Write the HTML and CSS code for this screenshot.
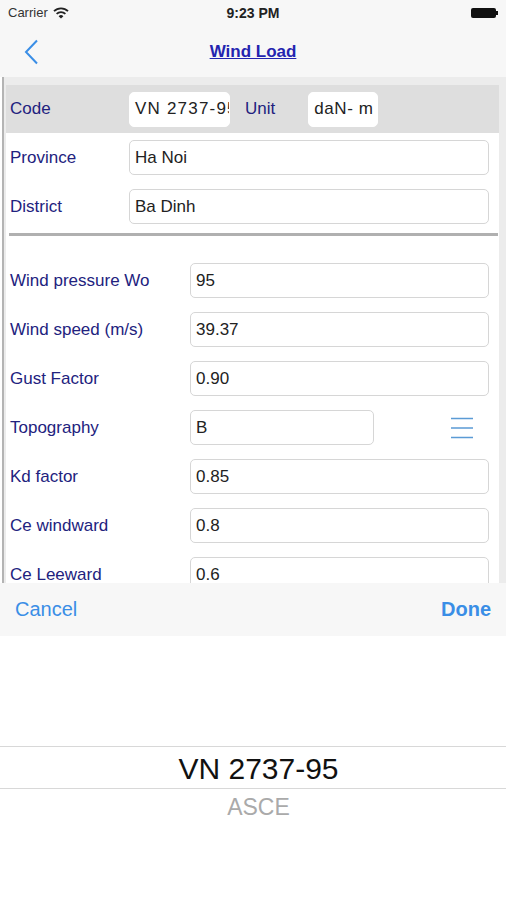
FILE: index.html
```html
<!DOCTYPE html>
<html lang="en">
<head>
  <meta charset="UTF-8">
  <link rel="stylesheet" href="styles.css">
  <title>Wind Load</title>
</head>
<body>
  <div class="status">
    <span class="carrier">Carrier
      <svg class="wifi" width="16" height="12" viewBox="0 0 16 12">
        <path d="M1 4.2 A10 10 0 0 1 15 4.2" fill="none" stroke="#222" stroke-width="1.8"/>
        <path d="M3.6 6.8 A6.4 6.4 0 0 1 12.4 6.8" fill="none" stroke="#222" stroke-width="1.8"/>
        <path d="M8 11.5 L5.6 9.2 A3.4 3.4 0 0 1 10.4 9.2 Z" fill="#222"/>
      </svg>
    </span>
    <span class="clock">9:23 PM</span>
    <span class="battery"><span class="cell"></span><span class="tip"></span></span>
  </div>

  <div class="navbar">
    <svg class="back" width="16" height="26" viewBox="0 0 16 26">
      <path d="M13 1.5 L2 13 L13 24.5" fill="none" stroke="#3a8ee6" stroke-width="2"/>
    </svg>
    <a class="title" href="#">Wind Load</a>
  </div>

  <div class="content">
    <div class="panel">
      <div class="row code-row">
        <span class="label">Code</span>
        <span class="field code">VN 2737-95</span>
        <span class="label unit">Unit</span>
        <span class="field unitbox">daN- m</span>
      </div>
      <div class="row">
        <span class="label">Province</span>
        <span class="field wide">Ha Noi</span>
      </div>
      <div class="row">
        <span class="label">District</span>
        <span class="field wide">Ba Dinh</span>
      </div>
      <div class="sep"></div>

      <div class="params">
        <div class="row">
          <span class="label">Wind pressure Wo</span>
          <span class="field">95</span>
        </div>
        <div class="row">
          <span class="label">Wind speed (m/s)</span>
          <span class="field">39.37</span>
        </div>
        <div class="row">
          <span class="label">Gust Factor</span>
          <span class="field">0.90</span>
        </div>
        <div class="row">
          <span class="label">Topography</span>
          <span class="field short">B</span>
          <svg class="menu" width="24" height="22" viewBox="0 0 24 22">
            <path d="M1 1.5 H23 M1 11 H23 M1 20.5 H23" stroke="#5b9bd5" stroke-width="1.6"/>
          </svg>
        </div>
        <div class="row">
          <span class="label">Kd factor</span>
          <span class="field">0.85</span>
        </div>
        <div class="row">
          <span class="label">Ce windward</span>
          <span class="field">0.8</span>
        </div>
        <div class="row">
          <span class="label">Ce Leeward</span>
          <span class="field">0.6</span>
        </div>
      </div>
    </div>
  </div>

  <div class="toolbar">
    <span class="btn">Cancel</span>
    <span class="btn done">Done</span>
  </div>

  <div class="picker">
    <div class="pick-sel">VN 2737-95</div>
    <div class="pick-next">ASCE</div>
  </div>
</body>
</html>
```

FILE: styles.css
```css
body {
  margin: 0;
  width: 506px;
  height: 900px;
  overflow: hidden;
  background: #fff;
  font-family: "Liberation Sans", Arial, sans-serif;
}

/* status bar + nav bar */
.status {
  height: 25px;
  background: #f7f7f7;
  display: flex;
  align-items: center;
  justify-content: space-between;
  padding: 0 8px;
  font-size: 13px;
  color: #333;
}
.carrier {
  width: 100px;
  display: flex;
  align-items: center;
  gap: 5px;
}
.clock {
  font-size: 14px;
  font-weight: bold;
  color: #222;
}
.battery {
  width: 100px;
  display: flex;
  justify-content: flex-end;
  align-items: center;
}
.battery .cell {
  width: 25px;
  height: 10px;
  background: #111;
  border-radius: 2px;
}
.battery .tip {
  width: 2px;
  height: 4px;
  background: #111;
}

.navbar {
  height: 50px;
  padding-top: 2px;
  background: #f7f7f7;
  display: flex;
  align-items: center;
  justify-content: center;
  position: relative;
}
.navbar .back {
  position: absolute;
  left: 24px;
  top: 14px;
}
.title {
  font-size: 17px;
  font-weight: bold;
  color: #2424b0;
  text-decoration: underline;
}

/* form */
.content {
  height: 498px;
  overflow: hidden;
  background: #ececec;
  margin-left: 2px;
  border-left: 2px solid #b4b4b4;
  padding: 8px 7px 0 2px;
}
.panel {
  background: #fff;
  height: 100%;
}
.row {
  height: 49px;
  display: flex;
  align-items: center;
  padding-left: 4px;
}
.code-row {
  height: 48px;
  background: #dedede;
}
.label {
  font-size: 17px;
  color: #22227e;
  width: 119px;
  flex: none;
}
.field {
  box-sizing: border-box;
  height: 35px;
  background: #fff;
  border: 1px solid #d6d6d6;
  border-radius: 5px;
  padding: 0 5px;
  display: flex;
  align-items: center;
  font-size: 17px;
  color: #222;
  white-space: nowrap;
  overflow: hidden;
}
.field.code {
  width: 101px;
  border-color: #fff;
  letter-spacing: 1.2px;
}
.label.unit {
  width: auto;
  margin-left: 15px;
  margin-right: 33px;
}
.field.unitbox {
  width: 70px;
  border-color: #fff;
  letter-spacing: 0.6px;
}
.field.wide {
  width: 360px;
}
.sep {
  height: 3px;
  background: #b0b0b0;
  margin: 2px 1px 0 3px;
}
.params {
  padding-top: 20px;
}
.params .label {
  width: 180px;
}
.params .field {
  width: 299px;
}
.params .field.short {
  width: 184px;
}
.menu {
  margin-left: 76px;
}

/* picker */
.toolbar {
  height: 53px;
  background: #f7f7f7;
  display: flex;
  align-items: center;
  justify-content: space-between;
  padding: 0 15px;
  font-size: 20px;
  color: #3a8ee6;
}
.done {
  font-weight: bold;
}
.picker {
  height: 264px;
  padding-top: 110px;
  padding-left: 11px;
  box-sizing: border-box;
  text-align: center;
}
.pick-sel {
  height: 41px;
  margin-left: -11px;
  padding-left: 11px;
  border-top: 1px solid #d8d8d8;
  border-bottom: 1px solid #d8d8d8;
  font-size: 30px;
  line-height: 43px;
  color: #111;
}
.pick-next {
  font-size: 23px;
  color: #aaa;
  margin-top: 5px;
}
```
